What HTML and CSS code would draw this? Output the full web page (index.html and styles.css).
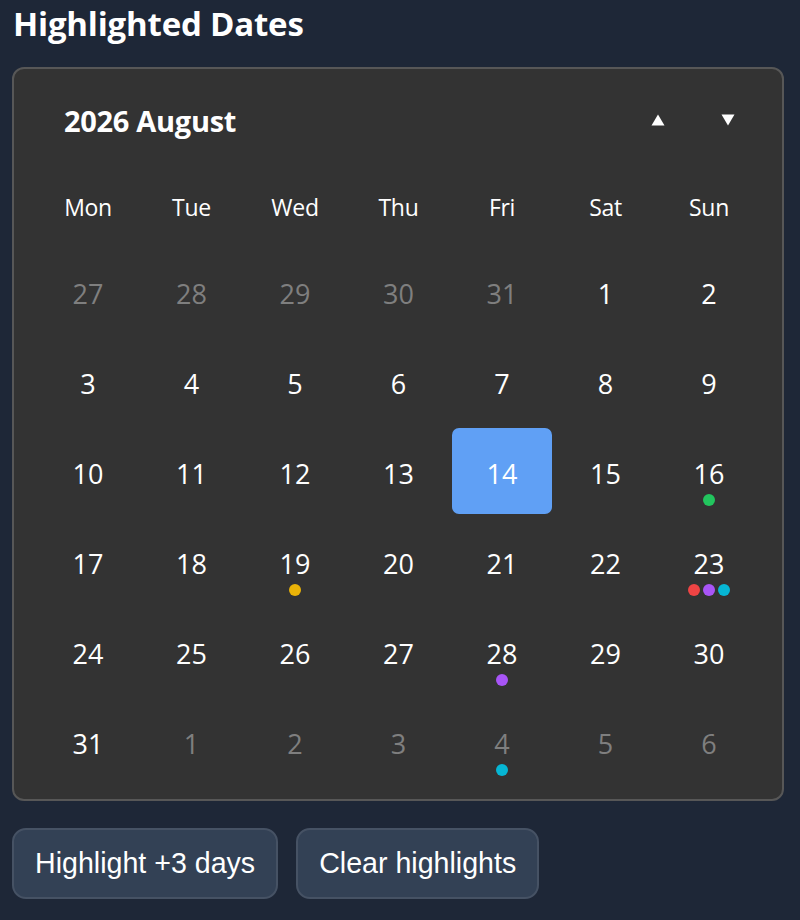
FILE: index.html
```html
<!DOCTYPE html>
<html lang="en">
<head>
<meta charset="utf-8">
<title>Highlighted Dates</title>
<link rel="stylesheet" href="styles.css">
</head>
<body>
<h3 class="title">Highlighted Dates</h3>
<div class="calendar">
  <div class="cal-header">
    <div class="cal-month">2026 August</div>
    <div class="cal-nav">
      <button class="nav-btn" aria-label="Previous month"><svg width="14" height="12" viewBox="0 0 14 12"><path d="M7 0.5 L13.5 11.5 L0.5 11.5 Z" fill="#ffffff"/></svg></button>
      <button class="nav-btn" aria-label="Next month"><svg width="14" height="12" viewBox="0 0 14 12"><path d="M0.5 0.5 L13.5 0.5 L7 11.5 Z" fill="#ffffff"/></svg></button>
    </div>
  </div>
  <div class="weekdays">
    <div class="wd">Mon</div><div class="wd">Tue</div><div class="wd">Wed</div><div class="wd">Thu</div><div class="wd">Fri</div><div class="wd">Sat</div><div class="wd">Sun</div>
  </div>
  <div class="days">
    <div class="day muted"><span class="num">27</span></div>
    <div class="day muted"><span class="num">28</span></div>
    <div class="day muted"><span class="num">29</span></div>
    <div class="day muted"><span class="num">30</span></div>
    <div class="day muted"><span class="num">31</span></div>
    <div class="day"><span class="num">1</span></div>
    <div class="day"><span class="num">2</span></div>

    <div class="day"><span class="num">3</span></div>
    <div class="day"><span class="num">4</span></div>
    <div class="day"><span class="num">5</span></div>
    <div class="day"><span class="num">6</span></div>
    <div class="day"><span class="num">7</span></div>
    <div class="day"><span class="num">8</span></div>
    <div class="day"><span class="num">9</span></div>

    <div class="day"><span class="num">10</span></div>
    <div class="day"><span class="num">11</span></div>
    <div class="day"><span class="num">12</span></div>
    <div class="day"><span class="num">13</span></div>
    <div class="day selected"><span class="num">14</span></div>
    <div class="day"><span class="num">15</span></div>
    <div class="day"><span class="num">16</span><span class="dots"><i class="dot green"></i></span></div>

    <div class="day"><span class="num">17</span></div>
    <div class="day"><span class="num">18</span></div>
    <div class="day"><span class="num">19</span><span class="dots"><i class="dot amber"></i></span></div>
    <div class="day"><span class="num">20</span></div>
    <div class="day"><span class="num">21</span></div>
    <div class="day"><span class="num">22</span></div>
    <div class="day"><span class="num">23</span><span class="dots"><i class="dot red"></i><i class="dot purple"></i><i class="dot cyan"></i></span></div>

    <div class="day"><span class="num">24</span></div>
    <div class="day"><span class="num">25</span></div>
    <div class="day"><span class="num">26</span></div>
    <div class="day"><span class="num">27</span></div>
    <div class="day"><span class="num">28</span><span class="dots"><i class="dot purple"></i></span></div>
    <div class="day"><span class="num">29</span></div>
    <div class="day"><span class="num">30</span></div>

    <div class="day"><span class="num">31</span></div>
    <div class="day muted"><span class="num">1</span></div>
    <div class="day muted"><span class="num">2</span></div>
    <div class="day muted"><span class="num">3</span></div>
    <div class="day muted"><span class="num">4</span><span class="dots"><i class="dot cyan"></i></span></div>
    <div class="day muted"><span class="num">5</span></div>
    <div class="day muted"><span class="num">6</span></div>
  </div>
</div>
<div class="actions">
  <button class="btn">Highlight +3 days</button>
  <button class="btn">Clear highlights</button>
</div>
</body>
</html>
```
FILE: styles.css
```css
html, body {
  margin: 0;
  padding: 0;
  background: #1e2737;
}
body {
  padding: 0 12px;
  color: #ffffff;
  font-family: "Open Sans", "Noto Sans", "DejaVu Sans", sans-serif;
}
.title {
  margin: 0;
  padding-top: 4px;
  height: 63px;
  font-size: 33px;
  font-weight: 700;
  line-height: 40px;
  letter-spacing: -0.2px;
  padding-left: 1px;
}
.calendar {
  width: 772px;
  height: 734px;
  box-sizing: border-box;
  background: #333333;
  border: 2px solid #575757;
  border-radius: 12px;
  padding: 22px 23px 0 24px;
}
.cal-header {
  height: 58px;
  display: flex;
  align-items: center;
  justify-content: space-between;
}
.cal-month {
  padding-left: 26px;
  font-size: 29px;
  font-weight: 700;
  letter-spacing: -0.3px;
}
.cal-nav {
  display: flex;
  gap: 44px;
  padding-right: 18px;
}
.nav-btn {
  background: transparent;
  border: 0;
  padding: 6px;
  display: flex;
  align-items: center;
  justify-content: center;
  cursor: pointer;
}
.weekdays {
  margin-top: 38px;
  display: grid;
  grid-template-columns: repeat(7, 100px);
  column-gap: 3.5px;
  height: 40px;
}
.wd {
  display: flex;
  align-items: center;
  justify-content: center;
  font-size: 23px;
  letter-spacing: -0.3px;
}
.days {
  margin-top: 21px;
  display: grid;
  grid-template-columns: repeat(7, 100px);
  grid-auto-rows: 86px;
  column-gap: 3.5px;
  row-gap: 4px;
}
.day {
  position: relative;
  display: flex;
  justify-content: center;
  align-items: center;
  border-radius: 6px;
  font-size: 27px;
}
.num {
  position: relative;
  top: 2px;
}
.day.muted {
  color: #7f7f7f;
}
.day.selected {
  background: #60a0f5;
  border-radius: 7px;
}
.dots {
  position: absolute;
  left: 0;
  right: 0;
  bottom: 8px;
  display: flex;
  justify-content: center;
  gap: 3px;
}
.dot {
  width: 12px;
  height: 12px;
  border-radius: 50%;
}
.dot.green { background: #22c55e; }
.dot.amber { background: #eab308; }
.dot.red { background: #ef4444; }
.dot.purple { background: #a855f7; }
.dot.cyan { background: #06b6d4; }
.actions {
  margin-top: 27px;
  display: flex;
  gap: 18px;
}
.btn {
  height: 71px;
  box-sizing: border-box;
  padding: 0 21px;
  background: #334155;
  border: 2px solid #465264;
  border-radius: 14px;
  color: #ffffff;
  font-family: "Liberation Sans", Arial, sans-serif;
  font-size: 28.6px;
}
```
